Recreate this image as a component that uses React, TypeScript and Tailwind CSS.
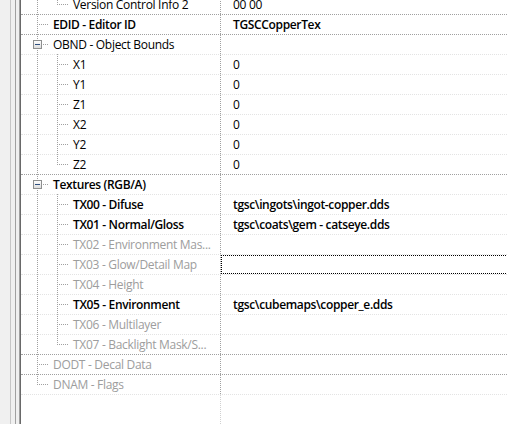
import clsx from "clsx"

type Row = {
  label: string
  level: 1 | 2
  value?: string
  bold?: boolean
  valueBold?: boolean
  muted?: boolean
  expanded?: boolean
  last?: boolean
  focus?: boolean
}

const rows: Row[] = [
  { label: "Version Control Info 2", level: 2, value: "00 00", last: true },
  { label: "EDID - Editor ID", level: 1, bold: true, value: "TGSCCopperTex", valueBold: true },
  { label: "OBND - Object Bounds", level: 1, expanded: true },
  { label: "X1", level: 2, value: "0" },
  { label: "Y1", level: 2, value: "0" },
  { label: "Z1", level: 2, value: "0" },
  { label: "X2", level: 2, value: "0" },
  { label: "Y2", level: 2, value: "0" },
  { label: "Z2", level: 2, value: "0", last: true },
  { label: "Textures (RGB/A)", level: 1, bold: true, expanded: true },
  { label: "TX00 - Difuse", level: 2, bold: true, value: "tgsc\\ingots\\ingot-copper.dds", valueBold: true },
  { label: "TX01 - Normal/Gloss", level: 2, bold: true, value: "tgsc\\coats\\gem - catseye.dds", valueBold: true },
  { label: "TX02 - Environment Mas...", level: 2, muted: true },
  { label: "TX03 - Glow/Detail Map", level: 2, muted: true, focus: true },
  { label: "TX04 - Height", level: 2, muted: true },
  { label: "TX05 - Environment", level: 2, bold: true, value: "tgsc\\cubemaps\\copper_e.dds", valueBold: true },
  { label: "TX06 - Multilayer", level: 2, muted: true },
  { label: "TX07 - Backlight Mask/S...", level: 2, muted: true, last: true },
  { label: "DODT - Decal Data", level: 1, muted: true },
  { label: "DNAM - Flags", level: 1, muted: true, last: true },
]

const dots = { stroke: "#a0a0a0", strokeWidth: 1, strokeDasharray: "1 1" }

function TreeLines({ row }: { row: Row }) {
  const w = row.level === 1 ? 32 : 52
  return (
    <svg width={w} height={20} className="-mt-px shrink-0 self-start">
      <defs>
        <linearGradient id="box" x1="0" y1="0" x2="0" y2="1">
          <stop offset="0" stopColor="#ffffff" />
          <stop offset="1" stopColor="#dcdcdc" />
        </linearGradient>
      </defs>
      {row.level === 2 && (
        <>
          <line x1={16.5} y1={0} x2={16.5} y2={20} {...dots} />
          <line x1={36.5} y1={0} x2={36.5} y2={row.last ? 11 : 20} {...dots} />
          <line x1={36} y1={10.5} x2={47} y2={10.5} {...dots} />
        </>
      )}
      {row.level === 1 && row.expanded && (
        <>
          <line x1={16.5} y1={0} x2={16.5} y2={6} {...dots} />
          <line x1={16.5} y1={16} x2={16.5} y2={20} {...dots} />
          <line x1={22} y1={10.5} x2={28} y2={10.5} {...dots} />
          <rect x={12.5} y={6.5} width={8} height={8} fill="url(#box)" stroke="#8e8f8f" />
          <line x1={14} y1={10.5} x2={19} y2={10.5} stroke="#2f4f7f" />
        </>
      )}
      {row.level === 1 && !row.expanded && (
        <>
          <line x1={16.5} y1={0} x2={16.5} y2={row.last ? 11 : 20} {...dots} />
          <line x1={18} y1={10.5} x2={28} y2={10.5} {...dots} />
        </>
      )}
    </svg>
  )
}

function TreeRow({ row, first }: { row: Row; first?: boolean }) {
  return (
    <div
      className={clsx(
        "flex h-5 shrink-0 border-t border-dotted",
        row.level === 1 ? "border-[#a0a0a0]" : "border-[#e3e3e3]",
        first && "-mt-[6px]",
        row.last && row.level === 1 && "h-[21px] border-b border-b-[#e3e3e3]"
      )}
    >
      <div className="flex w-[200px] shrink-0 items-center border-r border-dotted border-[#a0a0a0]">
        <TreeLines row={row} />
        <span
          className={clsx(
            "whitespace-nowrap",
            row.bold ? "font-[650] tracking-[-0.35px]" : "tracking-[-0.3px]",
            row.muted ? "text-[#9d9d9d]" : "text-black"
          )}
        >
          {row.label}
        </span>
      </div>
      <div className="flex min-w-0 flex-1 items-center">
        {row.focus ? (
          <div className="h-full w-[calc(100%+1px)] shrink-0 border border-dotted border-black" />
        ) : (
          <span
            className={clsx(
              "whitespace-nowrap pl-3 text-black",
              row.valueBold ? "font-[650] tracking-[-0.35px]" : "tracking-[-0.3px]"
            )}
          >
            {row.value}
          </span>
        )}
      </div>
    </div>
  )
}

export default function App() {
  return (
    <div className="flex h-[424px] w-[507px] overflow-hidden bg-white font-['Open_Sans','Noto_Sans',sans-serif] text-[12px] leading-none">
      <div className="w-[10px] shrink-0 bg-[#f0f0f0]" />
      <div className="w-px shrink-0 bg-[#c6c6c6]" />
      <div className="w-[4px] shrink-0 bg-[#f0f0f0]" />
      <div className="w-px shrink-0 bg-[#a0a0a0]" />
      <div className="w-[3px] shrink-0 bg-[#f0f0f0]" />
      <div className="w-px shrink-0 bg-[#a0a0a0]" />
      <div className="w-px shrink-0 bg-[#696969]" />
      <div className="flex min-w-0 flex-1 flex-col overflow-hidden">
        {rows.map((row, i) => (
          <TreeRow key={row.label} row={row} first={i === 0} />
        ))}
        <div className="flex flex-1">
          <div className="w-[200px] shrink-0 border-r border-dotted border-[#d0d0d0]" />
        </div>
      </div>
    </div>
  )
}
